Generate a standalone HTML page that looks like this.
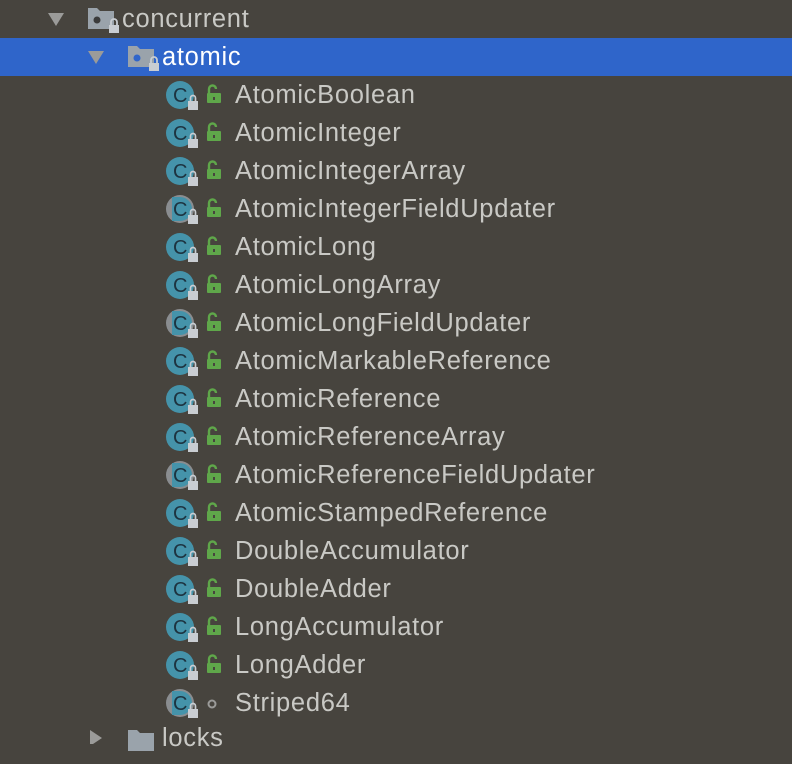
<!DOCTYPE html>
<html><head><style>
body{margin:0;width:792px;height:736px;background:#47443e;overflow:hidden;font-family:"Liberation Sans",sans-serif;position:relative}
.row{position:absolute;left:0;width:792px;height:38px}
.t{position:absolute;top:5px;font-size:25.5px;color:#c9c9c5;letter-spacing:0.7px}
.sel{background:#2f65ca}
.sel .t{color:#fff}
.tri{position:absolute;width:0;height:0;border-left:8px solid transparent;border-right:8px solid transparent;border-top:13px solid #9b9b99;top:13px}
</style></head><body>
<div class="row" style="top:0">
 <div class="tri" style="left:48px"></div>
 <svg style="position:absolute;left:88px;top:6px" width="34" height="30"><path d="M0 2h9l3 3h14v18H0z" fill="#9aa3ab"/><circle cx="9" cy="14" r="3.5" fill="#3b3b3b"/><rect x="21" y="19" width="10" height="8" fill="#c9cdd2"/><path d="M23 19v-3a3 3 0 0 1 6 0v3" stroke="#c9cdd2" stroke-width="1.8" fill="none"/></svg>
 <div class="t" style="left:122px">concurrent</div>
</div>
<div class="row sel" style="top:38px">
 <div class="tri" style="left:88px"></div>
 <svg style="position:absolute;left:128px;top:6px" width="34" height="30"><path d="M0 2h9l3 3h14v18H0z" fill="#9aa3ab"/><circle cx="9" cy="14" r="3.5" fill="#2f65ca"/><rect x="21" y="19" width="10" height="8" fill="#c9cdd2"/><path d="M23 19v-3a3 3 0 0 1 6 0v3" stroke="#c9cdd2" stroke-width="1.8" fill="none"/></svg>
 <div class="t" style="left:162px">atomic</div>
</div>
<div id="items"></div>
<div class="row" style="top:726px">
 <svg style="position:absolute;left:90px;top:4px" width="14" height="14"><path d="M0 0l12 8L0 16z" fill="#9b9b99"/></svg>
 <svg style="position:absolute;left:128px;top:2px" width="34" height="30"><path d="M0 2h9l3 3h14v18H0z" fill="#9aa3ab"/></svg>
 <div class="t" style="left:162px;top:-2px">locks</div>
</div>
<script>
var names=["AtomicBoolean","AtomicInteger","AtomicIntegerArray","*AtomicIntegerFieldUpdater","AtomicLong","AtomicLongArray","*AtomicLongFieldUpdater","AtomicMarkableReference","AtomicReference","AtomicReferenceArray","*AtomicReferenceFieldUpdater","AtomicStampedReference","DoubleAccumulator","DoubleAdder","LongAccumulator","LongAdder","#Striped64"];
var h="";
names.forEach(function(n,i){
 var abs=n[0]=="*"||n[0]=="#", pkg=n[0]=="#"; if(abs)n=n.slice(1);
 var y=76+i*38;
 var circ=abs?'<circle cx="14" cy="14" r="14" fill="#8a8d90"/><path d="M6 2h8a12 12 0 0 1 0 24h-8z" fill="#4593aa"/>':'<circle cx="14" cy="14" r="14" fill="#4593aa"/>';
 var lock=pkg?'<circle cx="46" cy="15" r="3.5" fill="none" stroke="#9b9b99" stroke-width="2"/>':'<rect x="41" y="12" width="14" height="10" rx="1" fill="#5fa74a"/><path d="M43 12v-4a3.5 3.5 0 0 1 7 0" stroke="#5fa74a" stroke-width="2.4" fill="none"/><rect x="47" y="16" width="2" height="3" fill="#47443e"/>';
 h+='<div class="row" style="top:'+y+'px"><svg style="position:absolute;left:166px;top:5px" width="60" height="34">'+circ+'<text x="7" y="21" font-family="Liberation Sans" font-size="20" fill="#1d3340">C</text><rect x="22" y="20" width="10" height="9" fill="#c9cdd2"/><path d="M24.5 20v-3a2.5 2.5 0 0 1 5 0v3" stroke="#c9cdd2" stroke-width="1.7" fill="none"/>'+lock+'</svg><div class="t" style="left:235px">'+n+'</div></div>';
});
document.getElementById("items").innerHTML=h;
</script>
</body></html>
